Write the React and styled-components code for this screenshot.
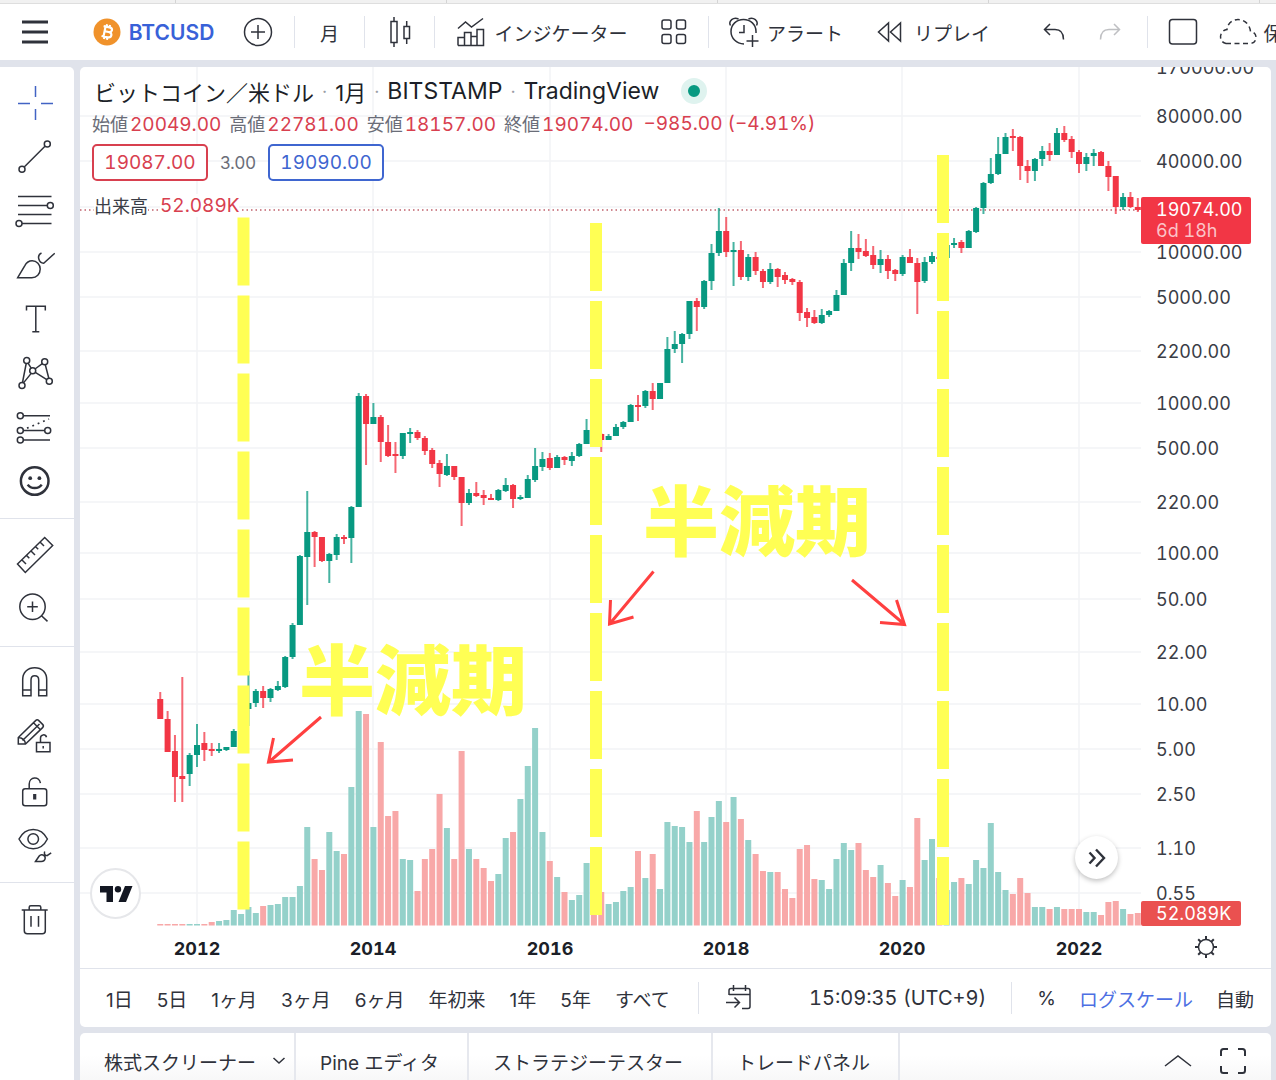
import React, { useState } from 'react';
import styled, { createGlobalStyle } from 'styled-components';

const GlobalStyle = createGlobalStyle`
  * { box-sizing: border-box; }
  body {
    margin: 0;
    background: #e0e3eb;
    color: #2f323b;
    font-family: Inter, 'Noto Sans CJK JP', sans-serif;
  }
  button {
    margin: 0;
    padding: 0;
    border: 0;
    background: none;
    color: inherit;
    font: inherit;
    white-space: nowrap;
    cursor: pointer;
  }
`;

const UP = '#089981';
const DOWN = '#f23645';
const FIRST_X = 160.25;
const STEP = 7.35;
const VOLUME_BASE = 925.5;

// one row per month from 2011/08: direction, high, body top, body bottom, low, volume top
const candles = `
d 692 699 719 719 924|d 711 719 752 752 924|d 735 751 777 802 924|d 677 776 779 802 924
u 753 755 774 786 924|u 724 745 755 767 924|d 732 743 750 761 924|d 743 749 751 756 922
u 743 749 751 753 921|u 747 747 750 751 920|u 729 731 747 747 910|u 708 709 731 731 914
u 671 703 709 726 907|u 689 691 703 707 913|d 686 691 698 708 906|u 688 689 698 702 905
u 681 686 690 691 904|u 656 657 687 688 897|u 623 625 657 659 897|u 555 556 625 625 886
u 491 532 557 605 827|d 531 532 537 567 859|d 537 537 561 562 870|u 553 554 561 583 832
u 534 537 555 560 851|d 535 537 539 544 854|u 506 507 538 563 787|u 393 396 507 507 711
d 394 396 424 465 714|u 403 417 424 424 827|d 415 417 442 462 742|d 425 442 456 457 816
d 442 454 456 473 811|u 433 433 456 459 859|u 428 432 434 443 860|d 430 432 438 440 891
d 436 438 451 455 859|d 448 450 464 468 849|d 460 463 474 487 794|u 454 466 475 476 828
d 466 466 477 480 859|d 477 477 503 526 751|u 489 493 503 505 849|d 482 493 496 497 859
d 490 495 498 505 868|d 494 498 500 500 881|u 489 490 500 501 874|u 478 485 491 492 838
d 484 485 499 508 832|u 495 497 499 500 799|u 475 479 498 498 766|u 448 466 480 482 728
u 452 459 467 471 832|d 453 458 468 470 861|u 455 457 468 468 877|d 456 457 460 465 892
u 452 456 461 466 900|u 443 444 456 457 895|u 419 430 444 444 863|d 428 430 437 445 880
d 433 434 440 452 892|u 434 436 440 440 904|u 424 427 436 436 902|u 421 422 427 429 891
u 404 405 422 422 887|d 395 405 407 421 851|u 390 391 406 408 878|d 383 391 399 410 854
u 383 383 399 399 889|u 337 349 383 383 822|u 331 344 349 353 826|u 333 334 344 363 827
u 301 301 334 339 842|d 298 301 307 331 811|u 280 281 307 309 842|u 244 253 281 290 817
u 208 231 253 256 801|d 217 231 252 257 822|u 242 250 252 286 797|d 241 250 277 280 819
u 254 257 277 281 840|d 252 257 271 275 854|d 269 271 282 288 871|u 263 269 282 284 872
d 268 269 277 287 872|d 272 275 280 284 889|d 278 279 282 285 898|d 280 282 313 321 849
d 308 312 318 327 845|d 310 317 323 324 879|u 309 315 323 324 880|u 310 311 315 317 889
u 290 295 311 311 859|u 259 263 295 295 843|u 231 248 263 271 850|d 234 248 252 259 843
d 239 251 256 257 870|d 246 255 265 269 877|u 250 259 265 273 865|d 255 259 271 279 883
d 269 270 274 281 896|u 255 257 274 276 880|d 249 257 263 263 887|d 258 263 282 314 818
u 257 262 281 283 860|u 252 256 262 264 839|d 256 257 259 262 878|u 243 245 258 259 890
u 238 243 245 248 882|d 240 242 248 253 878|u 230 231 248 248 884|u 207 208 232 233 860
u 182 183 208 214 868|u 158 174 183 184 823|u 137 154 174 175 872|u 133 137 154 154 890
d 129 136 138 151 894|d 136 137 166 180 878|d 160 166 171 183 893|u 158 159 171 181 907
u 146 151 159 166 907|d 143 151 155 161 909|u 128 133 155 155 907|d 126 133 140 142 909
d 136 139 152 158 909|d 150 152 164 173 909|u 153 157 164 171 912|u 149 153 156 166 912
d 151 152 166 166 915|d 161 166 177 191 902|d 176 176 207 214 901|u 193 197 207 210 909
d 192 197 207 208 914|d 198 207 210 212 913`
  .trim()
  .split(/[|\n]/)
  .map((row, i) => {
    const [dir, high, top, bottom, low, volume] = row.split(' ');
    return {
      x: FIRST_X + STEP * i,
      up: dir === 'u',
      high: +high,
      top: +top,
      bottom: +bottom,
      low: +low,
      volume: +volume,
    };
  });

const priceTicks = [
  ['170000.00', 67], ['80000.00', 116], ['40000.00', 161], ['', 207], ['10000.00', 252],
  ['5000.00', 297], ['2200.00', 351], ['1000.00', 403], ['500.00', 448], ['220.00', 502],
  ['100.00', 553], ['50.00', 599], ['22.00', 652], ['10.00', 704], ['5.00', 749],
  ['2.50', 794], ['1.10', 848], ['0.55', 893],
];

const yearTicks = [
  ['2012', 197], ['2014', 373], ['2016', 550], ['2018', 726], ['2020', 902], ['2022', 1079],
];

const halvings = [
  { x: 243.5, from: 217.5, to: 909.5 },
  { x: 596, from: 223, to: 915 },
  { x: 943, from: 155, to: 925 },
];

/* ---------- icons ---------- */

const Svg = styled.svg`
  display: block;
  flex: none;
  fill: none;
  stroke: currentColor;
  stroke-width: ${(p) => p.$stroke || 1.5};
`;

const Icon = ({ w = 40, h = 40, stroke, children }) => (
  <Svg width={w} height={h} viewBox={`0 0 ${w} ${h}`} $stroke={stroke} aria-hidden="true">
    {children}
  </Svg>
);

const drawTools = [
  [
    ['十字カーソル', <path d="M20.5 3v11M20.5 26v11M3 20.5h12M26 20.5h12" />],
    ['トレンドライン', <><circle cx="7" cy="32.3" r="3" /><circle cx="32.3" cy="7" r="3" /><path d="M9.2 30 30 9.3" /></>],
    ['フィボナッチ', <><path d="M3 5.5h33.500M3 14.500h29M3 23.500h33.500M7 32.500h29.500" /><circle cx="35.300" cy="14.500" r="3" /><circle cx="4" cy="32.500" r="3" /></>],
    ['ブラシ', <><path d="M2.700 32.700 9.700 20.800C11.500 17.500 14 15.800 17.200 15.800c4.600 0 8 3.800 8 8.300 0 5-3.600 8.600-8.400 8.600z" /><path d="M26.500 8c-2.500 1.200-3.400 3.800-2.600 6.200.7 2.400 2.800 3.800 4.800 4L39.800 8.200" /></>],
    ['テキスト', <path d="M11.500 11.500V7.300h18.800v4.200M20.800 7.300v25.400M17.300 32.700h7" />],
    ['パターン', <><circle cx="11.700" cy="7.500" r="3" /><circle cx="29.700" cy="8.700" r="3" /><circle cx="17.700" cy="17.700" r="3" /><circle cx="7" cy="32.500" r="3" /><circle cx="34.300" cy="28.300" r="3" /><path d="M11.200 10.500 7.500 29.500M13 10.200l3.200 5M20 16l7.300-5.300M30.300 11.700l3.500 13.600M20.300 19.300l11.500 7.300M8.500 29.900l7.700-9.500" /></>],
    ['予測', <><circle cx="5.300" cy="8.800" r="3" /><circle cx="5.300" cy="23.500" r="3" /><circle cx="32.700" cy="23.500" r="3" /><circle cx="5.300" cy="33" r="3" /><path d="M8.300 8.800H35M8.300 23.500h21.400M8.300 33H35" /><path d="M12 21.200 34 12" strokeWidth="1.800" strokeDasharray="1.800 4" /></>],
    ['アイコン', <><circle cx="19.700" cy="20" r="13.800" strokeWidth="2.500" /><circle cx="15.200" cy="17.200" r="1.900" fill="currentColor" stroke="none" /><circle cx="24.400" cy="17.200" r="1.900" fill="currentColor" stroke="none" /><path d="M12.700 23.600c3.200 4.600 10.800 4.600 14 0" strokeWidth="2.500" /></>],
  ],
  [
    ['ものさし', <path d="M2.500 29 29.700 2.500l8 8L10.300 37.500zM7 25l4 4M11.500 20.400l2.800 2.800M16 16l4 4M20.400 11.500l2.800 2.800M25 7l4 4" />],
    ['ズームイン', <><circle cx="17.500" cy="17.700" r="12.700" /><path d="M12.200 17.700h10.600M17.500 12.400V23M26.500 26.700l6 5.700" /></>],
  ],
  [
    ['マグネット', <path d="M7.700 32.700V16.500C7.700 9.500 12.500 4.700 19.700 4.700s12 4.800 12 11.800v16.200h-8V17c0-2.600-1.500-4.200-4-4.200S16 14.400 16 17v15.700zM7.700 27H16M23.700 27h8" />],
    ['描画モード', <><path d="M3.300 27V20.500L20.600 3.600c1-1 2.200-1 3.200 0l3.800 3.800c1 1 1 2.200 0 3.200L10.500 27zM3.300 20.500c4 0 7 2.800 7.200 6.500M7.500 23.500 24.500 7M18.500 5.800l7 7" /><path d="M21.500 25.500H35v9.200H21.500zM25.500 25.500V21c0-3.800 5-4.200 6-.8M28.200 29v2.500" /></>],
    ['ロック', <><rect x="7.700" y="17.700" width="24" height="17" rx="2.500" /><path d="M14.200 17.700V13c0-7.400 10.200-8.200 11.200-.8" /><path d="M19.700 23v5.500" strokeWidth="3.200" /></>],
    ['表示', <><path d="M4 14C10.500 1.200 26 1.200 32.400 14 26 27 10.500 27 4 14z" /><circle cx="18.200" cy="14" r="5.300" /><path d="M20.500 36.500 24.200 31c2-2.600 6.200-.8 6 2.200-.3 2.200-2 3.300-4 3.300zM29.700 26.500c-.9 2.200.2 3.800 2.300 4.100l4.200-2.800" /></>],
  ],
  [
    ['削除', <><path d="M6.700 11h26M14.200 11V8.300c0-1 .6-1.600 1.600-1.600h8.400c1 0 1.600.6 1.600 1.600V11M9.300 11v20.700c0 2 1 3 3 3h15c2 0 3-1 3-3V11M16 17v10.700M23.500 17v10.700" /></>],
  ],
];

/* ---------- page frame ---------- */

const Page = styled.div`
  min-height: 100vh;
  display: flex;
  flex-direction: column;
`;

const WindowEdge = styled.div`
  height: 4px;
  display: flex;
  overflow: hidden;
  background: #f1f1f1;
  border-bottom: 1px solid #dedede;
`;

const EdgeTab = styled.span`
  flex: none;
  width: 271px;
  border-right: 1px solid #d4d4d4;
  &:first-child {
    width: 176px;
  }
`;

const Toolbar = styled.header`
  height: 56px;
  display: flex;
  align-items: center;
  overflow: hidden;
  background: #fff;
  font-size: 19px;
`;

const ToolbarButton = styled.button`
  flex: none;
  width: ${(p) => p.$width}px;
  height: 56px;
  display: flex;
  align-items: center;
  justify-content: center;
  gap: ${(p) => p.$gap || 8}px;
  opacity: ${(p) => (p.disabled ? 0.3 : 1)};
`;

const SymbolButton = styled(ToolbarButton)`
  margin-left: 16px;
  color: #3861d8;
  font-size: 21px;
  font-weight: 600;
`;

const Divider = styled.span`
  flex: none;
  width: 1px;
  height: 32px;
  margin: ${(p) => p.$margin || '0'};
  background: #e0e3eb;
`;

const Spacer = styled.span`
  flex: ${(p) => (p.$width ? `0 0 ${p.$width}px` : '1')};
`;

const Workspace = styled.div`
  flex: 1;
  display: flex;
  gap: 6px;
  padding: 7px 5px 0 0;
`;

const Sidebar = styled.nav`
  flex: none;
  width: 74px;
  background: #fff;
  border-top-right-radius: 5px;
`;

const ToolGroup = styled.div`
  padding: 9px 0 10px;
  border-bottom: 1px solid #e0e3eb;
  &:last-child {
    border-bottom: none;
  }
`;

const ToolButton = styled.button`
  width: 70px;
  height: 54px;
  display: flex;
  align-items: center;
  justify-content: center;
  color: ${(p) => (p.$active ? '#4263c4' : '#2f323b')};
`;

const Main = styled.main`
  flex: 1;
  min-width: 0;
  display: flex;
  flex-direction: column;
  gap: 6px;
`;

const Panel = styled.section`
  background: #fff;
  border-radius: 5px;
  overflow: hidden;
`;

/* ---------- chart ---------- */

const ChartArea = styled.div`
  position: relative;
`;

const ChartSvg = styled.svg`
  display: block;
  width: 100%;
  height: auto;
  text {
    font-family: Inter, 'Noto Sans CJK JP', sans-serif;
    font-variant-numeric: tabular-nums;
  }
`;

const TickText = styled.text`
  font-size: 18px;
  fill: ${(p) => p.$color || '#3a3d46'};
`;

const YearText = styled.text`
  font-size: 18px;
  font-weight: 700;
  text-anchor: middle;
  fill: #1c1f28;
`;

const HalvingText = styled.text`
  font-size: 76px;
  font-weight: 900;
  fill: #ffff54;
`;

const Legend = styled.div`
  position: absolute;
  top: 8px;
  left: 12px;
`;

const LegendTitle = styled.h1`
  height: 32px;
  margin: 0;
  padding-left: 2px;
  display: flex;
  align-items: center;
  gap: 8px;
  color: #1c1f28;
  font-size: 22px;
  font-weight: 400;
  white-space: nowrap;
`;

const Exchange = styled.span`
  font-size: 23px;
`;

const Dot = styled.span`
  color: #9a9da6;
  font-size: 18px;
`;

const LiveBadge = styled.span`
  width: 26px;
  height: 26px;
  margin-left: 14px;
  border: 7px solid #dff3ef;
  border-radius: 50%;
  background: ${UP};
`;

const ValueRow = styled.div`
  height: 32px;
  display: flex;
  align-items: center;
  gap: 8px;
  color: #6a6d78;
  font-size: 18px;
  white-space: nowrap;
`;

const Value = styled.span`
  margin-left: 2px;
  color: #d8404f;
  font-size: 19px;
  font-variant-numeric: tabular-nums;
`;

const QuoteRow = styled.div`
  display: flex;
  align-items: center;
  gap: 12px;
  margin-top: 5px;
  color: #6a6d78;
  font-size: 17px;
`;

const QuoteButton = styled.button`
  width: 116px;
  height: 37px;
  border: 2px solid currentColor;
  border-radius: 5px;
  background: #fff;
  color: ${(p) => p.$color};
  font-size: 19px;
  font-variant-numeric: tabular-nums;
`;

const VolumeRow = styled(ValueRow)`
  height: 28px;
  margin-top: 10px;
  padding-left: 2px;
  gap: 10px;
  color: #3a3d46;
  span {
    background: #fff;
  }
`;

const RoundButton = styled.button`
  position: absolute;
  width: ${(p) => p.$size}px;
  height: ${(p) => p.$size}px;
  display: flex;
  align-items: center;
  justify-content: center;
  border-radius: 50%;
  background: #fff;
`;

const LogoButton = styled(RoundButton)`
  left: 10px;
  bottom: 49px;
  border: 2px solid #e6e7ea;
`;

const ScrollButton = styled(RoundButton)`
  right: 153px;
  bottom: 89px;
  box-shadow: 0 2px 5px rgba(0, 0, 0, 0.25);
`;

const AxisSettings = styled(RoundButton)`
  right: 50px;
  bottom: 6px;
`;

/* ---------- bottom bars ---------- */

const RangeBar = styled.div`
  height: 59px;
  display: flex;
  align-items: center;
  padding: 0 17px 0 26px;
  border-top: 1px solid #e0e3eb;
  font-size: 19px;
`;

const RangeList = styled.div`
  display: flex;
  gap: 24px;
`;

const TextButton = styled.button`
  color: ${(p) => (p.$active ? '#4d6fe3' : 'inherit')};
`;

const ClockButton = styled(TextButton)`
  font-size: 20px;
  font-variant-numeric: tabular-nums;
`;

const ScaleList = styled.div`
  display: flex;
  gap: 23px;
`;

const TabBar = styled.div`
  flex: 1;
  min-height: 47px;
  display: flex;
  background: linear-gradient(#fff 40%, #f5f5f6);
  border-radius: 5px 5px 0 0;
  font-size: 19px;
`;

const Tab = styled.button`
  display: flex;
  align-items: center;
  gap: 16px;
  height: 56px;
  padding: 0 ${(p) => p.$right || 28}px 0 24px;
  border-right: 2px solid #e6e8ee;
`;

const TabTools = styled.div`
  display: flex;
  align-items: center;
  height: 56px;
  gap: 26px;
  margin-left: auto;
  padding-right: 24px;
`;

const Chart = () => (
  <ChartSvg viewBox="80 67 1191 901" role="img" aria-label="BTCUSD">
    <g stroke="#f2f3f6" strokeWidth="1.5">
      {priceTicks.slice(1).map(([label, y]) => (
        <line key={y} x1="80" x2="1141" y1={y} y2={y} />
      ))}
      {yearTicks.map(([label, x]) => (
        <line key={x} x1={x} x2={x} y1="67" y2="925" />
      ))}
    </g>

    {candles.map((c) => (
      <rect
        key={c.x}
        x={c.x - 3}
        y={c.volume}
        width="6"
        height={VOLUME_BASE - c.volume}
        fill={c.up ? '#94d1ca' : '#f8a8a8'}
      />
    ))}

    <line x1="80" x2="1141" y1="210" y2="210" stroke="#c0616c" strokeWidth="1.5" strokeDasharray="1.500 3" />

    {candles.map((c) => (
      <g key={c.x} fill={c.up ? UP : DOWN}>
        <rect x={c.x - 1} y={c.high} width="2" height={c.low - c.high} opacity="0.75" />
        <rect x={c.x - 3} y={c.top} width="6" height={c.bottom - c.top} />
      </g>
    ))}

    {priceTicks.map(([label, y]) => (
      <TickText key={y} x="1156" y={y + 7}>{label}</TickText>
    ))}
    {yearTicks.map(([label, x]) => (
      <YearText key={x} x={x} y="955">{label}</YearText>
    ))}

    <rect x="1141" y="197" width="110" height="47" rx="2" fill={DOWN} />
    <TickText x="1156" y="216" $color="#fff">19074.00</TickText>
    <TickText x="1156" y="237" $color="#fbc3c8">6d 18h</TickText>
    <rect x="1141" y="901" width="100" height="25" rx="2" fill="#ea5150" />
    <TickText x="1156" y="920" $color="#fff">52.089K</TickText>

    {halvings.map((h) => (
      <line
        key={h.x}
        x1={h.x}
        x2={h.x}
        y1={h.from}
        y2={h.to}
        stroke="#ffff54"
        strokeWidth="12"
        strokeDasharray="68 10"
      />
    ))}
    <HalvingText x="299" y="709">半減期</HalvingText>
    <HalvingText x="643" y="550">半減期</HalvingText>
    <g fill="none" stroke="#ff4040" strokeWidth="3">
      <path d="M321 717 269 762M273.500 738 268.500 762 293 760" />
      <path d="M653.500 571.500 610 623.500M610.500 600 609.500 624 633.500 617" />
      <path d="M852 580 904 624M896.500 600 904.500 624.500 880 622.500" />
    </g>
  </ChartSvg>
);

const ranges = ['1日', '5日', '1ヶ月', '3ヶ月', '6ヶ月', '年初来', '1年', '5年', 'すべて'];

const ohlc = [
  ['始値', '20049.00'],
  ['高値', '22781.00'],
  ['安値', '18157.00'],
  ['終値', '19074.00'],
];

const App = () => {
  const [tool, setTool] = useState('十字カーソル');
  const [logScale, setLogScale] = useState(true);

  return (
    <Page>
      <GlobalStyle />
      <WindowEdge>
        {[0, 1, 2, 3, 4].map((n) => <EdgeTab key={n} />)}
      </WindowEdge>
      <Toolbar>
        <ToolbarButton $width={69} aria-label="メニュー">
          <Icon w={28} h={24} stroke={3}><path d="M1 2h26M1 12h26M1 22h26" /></Icon>
        </ToolbarButton>
        <SymbolButton $width={137}>
          <Icon w={28} h={28}>
            <circle cx="14" cy="14" r="13.500" fill="#f0922b" stroke="none" />
            <g transform="rotate(12 14 14)" stroke="#fff" strokeWidth="2.200">
              <path d="M9.500 9h6c4 0 4 4.700 0 4.700h-4M11.500 9v10M9.500 19h6.300c4.200 0 4.200-5.300 0-5.300M12.500 6.500V9M15.500 6.500V9M12.500 19v2.500M15.500 19v2.500" />
            </g>
          </Icon>
          BTCUSD
        </SymbolButton>
        <ToolbarButton $width={72} aria-label="シンボル比較">
          <Icon w={30} h={30}><circle cx="15" cy="15" r="13.500" /><path d="M15 8v14M8 15h14" /></Icon>
        </ToolbarButton>
        <Divider />
        <ToolbarButton $width={69}>月</ToolbarButton>
        <Divider />
        <ToolbarButton $width={69} aria-label="ローソク足">
          <Icon w={24} h={32}><path d="M3 5.500h6v21H3zM6 1v4.500M6 26.500V31M16 10.500h5.500v12H16zM18.700 5v5.500M18.700 22.500V28" /></Icon>
        </ToolbarButton>
        <Divider $margin="0 9px 0 0" />
        <ToolbarButton $width={196} $gap={8}>
          <Icon w={30} h={30}><path d="M2 28.500v-8h6.500v8M8.500 28.500v-13H15v13M15 28.500v-9h6v9M21 28.500v-16h6.500v16zM2 28.500h19M2 11.500 9.500 5l6 5L27 1.500" /></Icon>
          インジケーター
        </ToolbarButton>
        <ToolbarButton $width={68} aria-label="レイアウト">
          <Icon w={28} h={28}><rect x="2" y="2" width="9" height="9" rx="2" /><rect x="16.500" y="2" width="9" height="9" rx="2" /><rect x="2" y="16.500" width="9" height="9" rx="2" /><rect x="16.500" y="16.500" width="9" height="9" rx="2" /></Icon>
        </ToolbarButton>
        <Divider />
        <ToolbarButton $width={153} $gap={7}>
          <Icon w={32} h={32}>
            <path d="M16 28C8 27.500 3 22 3 15.500 3 8.500 8.500 3.500 15.500 3.500S28 8.500 28 15.500v1.500M2.500 9.500C0 5 5.500.500 10.500 3M28.500 9.500C31 5 25.500.500 20.500 3M16 9v7.500h-5M24.500 19v12M18.500 25h12" />
          </Icon>
          アラート
        </ToolbarButton>
        <ToolbarButton $width={143} $gap={12}>
          <Icon w={25} h={22}><path d="M11.500 2v18L1.500 11zM23.500 2v18l-10-9z" /></Icon>
          リプレイ
        </ToolbarButton>
        <Spacer $width={21} />
        <ToolbarButton $width={56} aria-label="元に戻す">
          <Icon w={24} h={20}><path d="M8 2 2.500 7.500 8 13M3 7.500h10c5.500 0 8.500 3.500 8.500 10" /></Icon>
        </ToolbarButton>
        <ToolbarButton $width={56} disabled aria-label="やり直す">
          <Icon w={24} h={20}><path d="m16 2 5.500 5.500L16 13M21 7.500H11c-5.500 0-8.500 3.500-8.500 10" /></Icon>
        </ToolbarButton>
        <Divider $margin="0 0 0 9px" />
        <ToolbarButton $width={69} aria-label="レイアウト選択">
          <Icon w={30} h={28}><rect x="1.500" y="1.500" width="27" height="24.500" rx="3" /></Icon>
        </ToolbarButton>
        <ToolbarButton $width={86} $gap={5}>
          <Icon w={40} h={28}>
            <path d="M8 25.500H32c8 0 8-11.500.500-12C31.500 5 25 1.500 20 1.500S9.500 5 9 11.500C1 12.500 0 24 8 25.500z" strokeDasharray="5 3.500" />
          </Icon>
          保存
        </ToolbarButton>
      </Toolbar>

      <Workspace>
        <Sidebar>
          {drawTools.map((group, i) => (
            <ToolGroup key={i}>
              {group.map(([name, shape]) => (
                <ToolButton key={name} aria-label={name} $active={tool === name} onClick={() => setTool(name)}>
                  <Icon>{shape}</Icon>
                </ToolButton>
              ))}
            </ToolGroup>
          ))}
        </Sidebar>

        <Main>
          <Panel>
            <ChartArea>
              <Chart />
              <Legend>
                <LegendTitle>
                  ビットコイン／米ドル<Dot>·</Dot>1月<Dot>·</Dot>
                  <Exchange>BITSTAMP</Exchange>
                  <Dot>·</Dot>
                  <Exchange>TradingView</Exchange>
                  <LiveBadge />
                </LegendTitle>
                <ValueRow>
                  {ohlc.map(([label, value]) => (
                    <span key={label}>{label}<Value>{value}</Value></span>
                  ))}
                  <Value>−985.00 (−4.91%)</Value>
                </ValueRow>
                <QuoteRow>
                  <QuoteButton $color="#d8404f">19087.00</QuoteButton>
                  3.00
                  <QuoteButton $color="#3f66d0">19090.00</QuoteButton>
                </QuoteRow>
                <VolumeRow>
                  <span>出来高</span>
                  <Value>52.089K</Value>
                </VolumeRow>
              </Legend>
              <LogoButton $size={51} aria-label="TradingView">
                <Icon w={34} h={20}>
                  <g fill="#131722" stroke="none">
                    <path d="M1 2h13v16H7.500V8.500H1zM26 2h7.500L27 18h-7.500z" />
                    <circle cx="19" cy="5.300" r="3.200" />
                  </g>
                </Icon>
              </LogoButton>
              <ScrollButton $size={43} aria-label="最新のバーへ">
                <Icon w={20} h={20} stroke={2.4}><path d="m2.500 4.500 5 5.500-5 5.500M9 1.500l8 8.500-8 8.500" /></Icon>
              </ScrollButton>
              <AxisSettings $size={30} aria-label="設定">
                <Icon w={26} h={26}>
                  <circle cx="13" cy="13" r="7.500" />
                  <path d="M13 5.500V2M13 24v-3.500M5.500 13H2M24 13h-3.500M7.700 7.700 5.200 5.200M20.800 20.800l-2.500-2.500M7.700 18.300l-2.500 2.500M20.800 5.200l-2.500 2.500" strokeWidth="2" />
                </Icon>
              </AxisSettings>
            </ChartArea>

            <RangeBar>
              <RangeList>
                {ranges.map((r) => <TextButton key={r}>{r}</TextButton>)}
              </RangeList>
              <Divider $margin="0 26px 0 28px" />
              <TextButton aria-label="日付へ移動">
                <Icon w={28} h={28}><path d="M4 11V6.500c0-1.300.700-2 2-2h17c1.300 0 2 .700 2 2v16c0 1.300-.700 2-2 2h-6M8.500 1v6M20.500 1v6M4 10.500h21M1 18.500h13M9.500 13.500l5 5-5 5" /></Icon>
              </TextButton>
              <Spacer />
              <ClockButton>15:09:35 (UTC+9)</ClockButton>
              <Divider $margin="0 25px" />
              <ScaleList>
                <TextButton>%</TextButton>
                <TextButton $active={logScale} onClick={() => setLogScale(!logScale)}>ログスケール</TextButton>
                <TextButton>自動</TextButton>
              </ScaleList>
            </RangeBar>
          </Panel>

          <TabBar>
            <Tab $right={8}>
              株式スクリーナー
              <Icon w={14} h={10}><path d="m1.500 2 5.500 5 5.500-5" /></Icon>
            </Tab>
            <Tab>Pine エディタ</Tab>
            <Tab>ストラテジーテスター</Tab>
            <Tab>トレードパネル</Tab>
            <TabTools>
              <TextButton aria-label="パネルを開く">
                <Icon w={30} h={16}><path d="M2 13 15 3l13 10" /></Icon>
              </TextButton>
              <TextButton aria-label="最大化">
                <Icon w={28} h={28} stroke={2}><path d="M2 9V4.500C2 3 3 2 4.500 2H9M19 2h4.500C25 2 26 3 26 4.500V9M26 19v4.500c0 1.500-1 2.500-2.500 2.500H19M9 26H4.500C3 26 2 25 2 23.500V19" /></Icon>
              </TextButton>
            </TabTools>
          </TabBar>
        </Main>
      </Workspace>
    </Page>
  );
};

export default App;
